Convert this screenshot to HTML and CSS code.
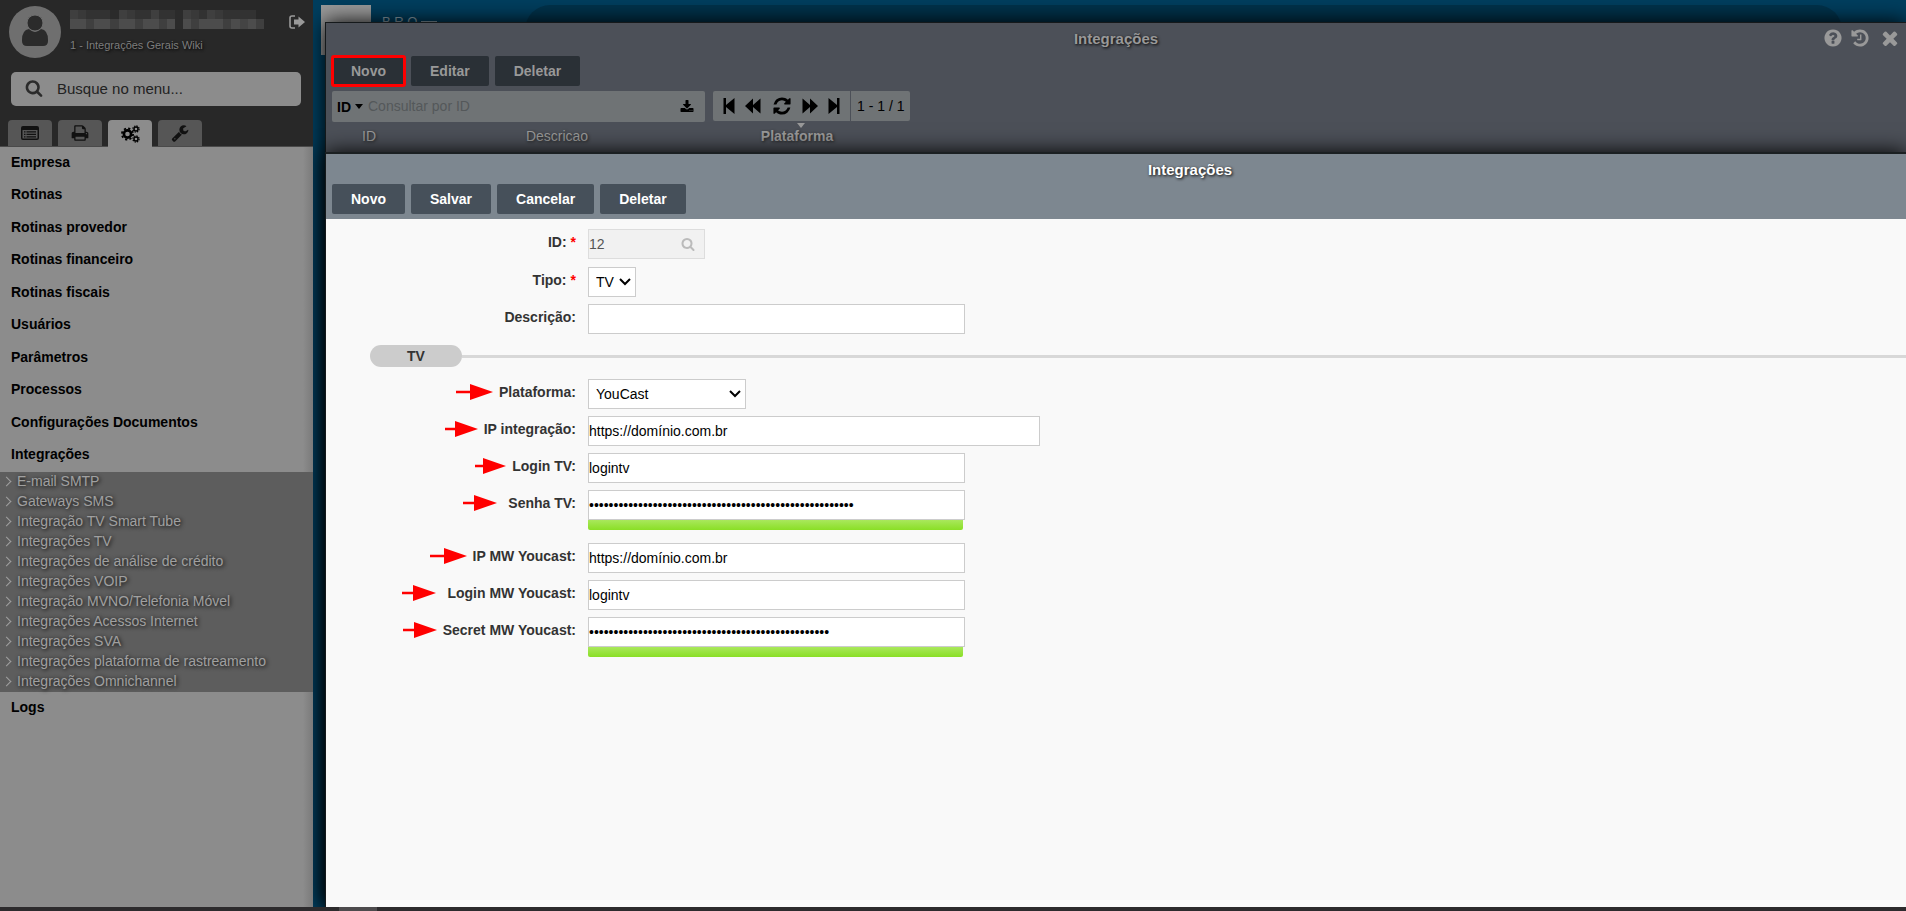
FILE: index.html
```
<!DOCTYPE html>
<html lang="pt-BR">
<head>
    <meta charset="UTF-8">
    <meta name="viewport" content="width=device-width, initial-scale=1.0">
    <title>Integrações</title>
    <link rel="stylesheet" href="styles.css">
</head>
<body>
    <div class="workspace">
        <aside class="sidebar">
            <header class="sidebar-header">
                <div class="user">
                    <svg class="avatar" viewBox="0 0 52 52" aria-hidden="true">
                        <circle cx="26" cy="26" r="26" fill="#6f6f6f"/>
                        <path d="M20 23q-7 1-7 11v1q0 5 5 5h16q5 0 5-5v-1q0-10-7-11-3 3-6 3t-6-3z" fill="#2b2b2b"/>
                        <circle cx="26" cy="17" r="8" fill="#2b2b2b" stroke="#6f6f6f"/>
                    </svg>
                    <div class="user-info">
                        <svg class="user-name" viewBox="0 0 194 20" aria-hidden="true" shape-rendering="crispEdges">
                            <path fill="#323232" d="M0 0h186v19H0z"/>
                            <path fill="#3f3f3f" d="M0 0h8v9H0zM49 0h8v9h-8zM81 0h8v9h-8zM113 0h8v9h-8zM137 0h8v9h-8zM16 9h8v10h-8zM40 9h9v10h-9zM65 9h8v10h-8zM89 9h8v10h-8zM121 9h8v10h-8zM153 9h8v10h-8zM186 9h8v10h-8z"/>
                            <path fill="#393939" d="M8 0h8v9H8zM57 0h8v9h-8zM121 0h8v9h-8zM145 0h8v9h-8z"/>
                            <path fill="#4c4c4c" d="M0 9h16v10H0zM24 9h16v10H24zM49 9h16v10H49zM73 9h16v10H73zM97 9h8v10h-8zM113 9h8v10h-8zM129 9h24v10h-24zM161 9h9v10h-9zM178 9h8v10h-8z"/>
                            <path fill="#444" d="M170 9h8v10h-8z"/>
                            <path fill="#2b2b2b" d="M40 0h9v9h-9zM105 0h8v19h-8z"/>
                        </svg>
                        <p class="user-company">1 - Integrações Gerais Wiki</p>
                    </div>
                    <button class="icon-btn logout" aria-label="Sair">
                        <svg width="16" height="14" viewBox="0 0 16 14">
                            <path d="M6 1H3Q1 1 1 3v8q0 2 2 2h3" fill="none" stroke="#999" stroke-width="1.6"/>
                            <path d="M5 4.500h4.500V1.500L16 7l-6.500 5.500V9.500H5z" fill="#999"/>
                        </svg>
                    </button>
                </div>
                <label class="menu-search">
                    <svg width="18" height="18" viewBox="0 0 1792 1792" aria-hidden="true"><path d="M1216 832q0-185-131.500-316.500t-316.500-131.500-316.500 131.500-131.500 316.500 131.500 316.500 316.500 131.500 316.500-131.500 131.500-316.500zm512 832q0 52-38 90t-90 38q-54 0-90-38l-343-342q-179 124-399 124-143 0-273.500-55.500t-225-150-150-225-55.500-273.500 55.500-273.500 150-225 225-150 273.500-55.500 273.500 55.500 225 150 150 225 55.500 273.500q0 220-124 399l343 343q37 37 37 90z"/></svg>
                    <input type="text" placeholder="Busque no menu..." aria-label="Busque no menu">
                </label>
                <nav class="tabs">
                    <button class="tab" aria-label="Cadastros">
                        <svg width="18" height="14" viewBox="0 0 18 14">
                            <path fill-rule="evenodd" d="M2 0h14q2 0 2 2v10q0 2-2 2H2q-2 0-2-2V2Q0 0 2 0zM1.500 4v8q0 .5.5.5h14q.5 0 .5-.5V4z"/>
                            <path d="M3 5.200h1.500v1.300H3zM3 7.700h1.500V9H3zM3 10.200h1.500v1.300H3zM5.500 5.200H15v1.300H5.500zM5.500 7.700H15V9H5.500zM5.500 10.200H15v1.300H5.500z"/>
                        </svg>
                    </button>
                    <button class="tab" aria-label="Relatórios">
                        <svg width="18" height="18" viewBox="0 0 1792 1792"><path d="M448 1536h896v-256h-896v256zm0-640h896v-384h-160q-40 0-68-28t-28-68v-160h-640v640zm1152 64q0-26-19-45t-45-19-45 19-19 45 19 45 45 19 45-19 19-45zm128 0v416q0 13-9.500 22.500t-22.500 9.500h-224v160q0 40-28 68t-68 28h-960q-40 0-68-28t-28-68v-160h-224q-13 0-22.500-9.500t-9.500-22.500v-416q0-79 56.500-135.500t135.500-56.500h64v-544q0-40 28-68t68-28h672q40 0 88 20t76 48l152 152q28 28 48 76t20 88v256h64q79 0 135.500 56.500t56.500 135.500z"/></svg>
                    </button>
                    <button class="tab active" aria-label="Sistema">
                        <svg width="19" height="18" viewBox="0 0 19 18" fill="none" stroke="#000">
                            <circle cx="6.500" cy="9" r="3.600" stroke-width="2.600"/>
                            <circle cx="6.500" cy="9" r="5.600" stroke-width="1.800" stroke-dasharray="2.200 2.198"/>
                            <circle cx="15" cy="4" r="2" stroke-width="1.400"/>
                            <circle cx="15" cy="4" r="3.100" stroke-width="1.200" stroke-dasharray="1.400 1.034"/>
                            <circle cx="15" cy="14" r="2" stroke-width="1.400"/>
                            <circle cx="15" cy="14" r="3.100" stroke-width="1.200" stroke-dasharray="1.400 1.034"/>
                        </svg>
                    </button>
                    <button class="tab" aria-label="Ferramentas">
                        <svg width="18" height="18" viewBox="0 0 1792 1792"><path d="M448 1472q0-26-19-45t-45-19-45 19-19 45 19 45 45 19 45-19 19-45zm644-420l-682 682q-37 37-90 37-52 0-91-37l-106-108q-38-36-38-90 0-53 38-91l681-681q39 98 114.500 173.500t173.500 114.500zm634-435q0 39-23 106-47 134-164.500 217.500t-258.500 83.500q-185 0-316.500-131.500t-131.500-316.500 131.500-316.500 316.500-131.500q58 0 121.500 16.500t107.500 46.500q16 11 16 28t-16 28l-293 169v224l193 107q5-3 79-48.500t135.500-81 70.500-35.500q15 0 23.500 10t8.500 25z"/></svg>
                    </button>
                </nav>
            </header>
            <ul class="menu">
                <li><a href="#">Empresa</a></li>
                <li><a href="#">Rotinas</a></li>
                <li><a href="#">Rotinas provedor</a></li>
                <li><a href="#">Rotinas financeiro</a></li>
                <li><a href="#">Rotinas fiscais</a></li>
                <li><a href="#">Usuários</a></li>
                <li><a href="#">Parâmetros</a></li>
                <li><a href="#">Processos</a></li>
                <li><a href="#">Configurações Documentos</a></li>
                <li>
                    <a href="#">Integrações</a>
                    <ul class="submenu">
                        <li><a href="#">E-mail SMTP</a></li>
                        <li><a href="#">Gateways SMS</a></li>
                        <li><a href="#">Integração TV Smart Tube</a></li>
                        <li><a href="#">Integrações TV</a></li>
                        <li><a href="#">Integrações de análise de crédito</a></li>
                        <li><a href="#">Integrações VOIP</a></li>
                        <li><a href="#">Integração MVNO/Telefonia Móvel</a></li>
                        <li><a href="#">Integrações Acessos Internet</a></li>
                        <li><a href="#">Integrações SVA</a></li>
                        <li><a href="#">Integrações plataforma de rastreamento</a></li>
                        <li><a href="#">Integrações Omnichannel</a></li>
                    </ul>
                </li>
                <li><a href="#">Logs</a></li>
            </ul>
        </aside>

        <main class="desktop">
            <div class="topbar">
                <div class="brand-logo"></div>
                <div class="brand-name">B R O<span class="brand-dash"></span></div>
                <div class="topbar-search"></div>
            </div>

            <!-- Lista -->
            <section class="window window-list">
                <div class="window-title">
                    <h2>Integrações</h2>
                    <div class="window-actions">
                        <button class="icon-btn" aria-label="Ajuda"><svg width="20" height="20" viewBox="0 0 1792 1792"><path d="M1024 1376v-192q0-14-9-23t-23-9h-192q-14 0-23 9t-9 23v192q0 14 9 23t23 9h192q14 0 23-9t9-23zm256-672q0-88-55.500-163t-138.500-116-170-41q-243 0-371 213-15 24 8 42l132 100q7 6 19 6 16 0 25-12 53-68 86-92 34-24 86-24 48 0 85.500 26t37.500 59q0 38-20 61t-68 45q-63 28-115.500 86.500t-52.500 125.500v36q0 14 9 23t23 9h192q14 0 23-9t9-23q0-19 21.500-49.500t54.500-49.500q32-18 49-28.500t46-35 44.500-48 28-60.500 12.500-81zm384 192q0 209-103 385.500t-279.500 279.500-385.500 103-385.500-103-279.500-279.500-103-385.500 103-385.500 279.500-279.500 385.500-103 385.500 103 279.500 279.500 103 385.500z"/></svg></button>
                        <button class="icon-btn" aria-label="Histórico"><svg width="20" height="20" viewBox="0 0 1792 1792"><path d="M1664 896q0 156-61 298t-164 245-245 164-298 61q-172 0-327-72.500t-264-204.500q-7-10-6.500-22.500t8.500-20.500l137-138q10-9 25-9 16 2 23 12 73 95 179 147t225 52q104 0 198.500-40.500t163.500-109.500 109.500-163.500 40.500-198.500-40.500-198.500-109.500-163.500-163.500-109.500-198.500-40.500q-98 0-188 35.500t-160 101.500l137 138q31 30 14 69-17 40-59 40h-448q-26 0-45-19t-19-45v-448q0-42 40-59 39-17 69 14l130 129q107-101 244.500-156.500t284.500-55.500q156 0 298 61t245 164 164 245 61 298zm-640-288v448q0 14-9 23t-23 9h-320q-14 0-23-9t-9-23v-64q0-14 9-23t23-9h224v-352q0-14 9-23t23-9h64q14 0 23 9t9 23z"/></svg></button>
                        <button class="icon-btn" aria-label="Fechar"><svg width="22" height="22" viewBox="0 0 1792 1792"><path d="M1490 1322q0 40-28 68l-136 136q-28 28-68 28t-68-28l-294-294-294 294q-28 28-68 28t-68-28l-136-136q-28-28-28-68t28-68l294-294-294-294q-28-28-28-68t28-68l136-136q28-28 68-28t68 28l294 294 294-294q28-28 68-28t68 28l136 136q28 28 28 68t-28 68l-294 294 294 294q28 28 28 68z"/></svg></button>
                    </div>
                </div>
                <div class="toolbar">
                    <button class="btn highlight">Novo</button>
                    <button class="btn">Editar</button>
                    <button class="btn">Deletar</button>
                </div>
                <div class="filter">
                    <div class="filter-box">
                        <button class="filter-field">ID<span class="caret"></span></button>
                        <input type="text" placeholder="Consultar por ID" aria-label="Consultar por ID">
                        <button class="icon-btn" aria-label="Exportar"><svg width="14" height="14" viewBox="0 0 1792 1792"><path d="M1344 1344q0-26-19-45t-45-19-45 19-19 45 19 45 45 19 45-19 19-45zm256 0q0-26-19-45t-45-19-45 19-19 45 19 45 45 19 45-19 19-45zm128-224v320q0 40-28 68t-68 28h-1472q-40 0-68-28t-28-68v-320q0-40 28-68t68-28h465l135 136q58 56 136 56t136-56l136-136h464q40 0 68 28t28 68zm-325-569q17 41-14 70l-448 448q-18 19-45 19t-45-19l-448-448q-31-29-14-70 17-39 59-39h256v-448q0-26 19-45t45-19h256q26 0 45 19t19 45v448h256q42 0 59 39z"/></svg></button>
                    </div>
                    <div class="pager">
                        <button class="icon-btn" aria-label="Primeiro"><svg width="12" height="16" viewBox="0 0 12 16"><path d="M.5 0H3v7L11.500 0v16L3 9v7H.5z"/></svg></button>
                        <button class="icon-btn" aria-label="Anterior"><svg width="16" height="16" viewBox="0 0 16 16"><path d="M0 8l8-7.500V7l7.500-6.500v15L8 9v6.500z"/></svg></button>
                        <button class="icon-btn" aria-label="Atualizar"><svg width="20" height="20" viewBox="0 0 1792 1792"><path d="M1639 1056q0 5-1 7-64 268-268 434.500t-478 166.500q-146 0-282.500-55t-243.500-157l-129 129q-19 19-45 19t-45-19-19-45v-448q0-26 19-45t45-19h448q26 0 45 19t19 45-19 45l-137 137q71 66 161 102t187 36q134 0 250-65t186-179q11-17 53-117 8-23 30-23h192q13 0 22.500 9.500t9.500 22.500zm25-800v448q0 26-19 45t-45 19h-448q-26 0-45-19t-19-45 19-45l138-138q-148-137-349-137-134 0-250 65t-186 179q-11 17-53 117-8 23-30 23h-199q-13 0-22.500-9.500t-9.500-22.500v-7q65-268 270-434.500t480-166.500q146 0 284 55.500t245 156.500l130-129q19-19 45-19t45 19 19 45z"/></svg></button>
                        <button class="icon-btn" aria-label="Próximo"><svg width="16" height="16" viewBox="0 0 16 16"><path d="M.5.5L8 7V.5L16 8l-8 7.500V9L.5 15.500z"/></svg></button>
                        <button class="icon-btn" aria-label="Último"><svg width="12" height="16" viewBox="0 0 12 16"><path d="M11.500 0H9v7L.5 0v16L9 9v7h2.500z"/></svg></button>
                    </div>
                    <div class="pager-info">1 - 1 / 1</div>
                </div>
                <table class="grid">
                    <thead>
                        <tr>
                            <th class="col-id">ID</th>
                            <th class="col-desc">Descricao</th>
                            <th class="col-plat sorted">Plataforma</th>
                        </tr>
                    </thead>
                </table>
            </section>

            <!-- Formulário -->
            <section class="window window-form">
                <div class="form-header">
                    <div class="window-title">
                        <h2>Integrações</h2>
                    </div>
                    <div class="toolbar">
                        <button class="btn">Novo</button>
                        <button class="btn">Salvar</button>
                        <button class="btn">Cancelar</button>
                        <button class="btn">Deletar</button>
                    </div>
                </div>
                <form class="form">
                    <div class="row">
                        <label for="id">ID: <span class="required">*</span></label>
                        <div class="lookup">
                            <input id="id" type="text" value="12" disabled>
                            <svg width="14" height="14" viewBox="0 0 1792 1792" aria-hidden="true"><path d="M1216 832q0-185-131.500-316.500t-316.500-131.500-316.500 131.500-131.500 316.500 131.500 316.500 316.500 131.500 316.500-131.500 131.500-316.500zm512 832q0 52-38 90t-90 38q-54 0-90-38l-343-342q-179 124-399 124-143 0-273.500-55.500t-225-150-150-225-55.500-273.500 55.500-273.500 150-225 225-150 273.500-55.500 273.500 55.500 225 150 150 225 55.500 273.500q0 220-124 399l343 343q37 37 37 90z"/></svg>
                        </div>
                    </div>
                    <div class="row">
                        <label for="tipo">Tipo: <span class="required">*</span></label>
                        <select id="tipo" class="field-xs">
                            <option>TV</option>
                        </select>
                    </div>
                    <div class="row">
                        <label for="descricao">Descrição:</label>
                        <input id="descricao" class="field" type="text">
                    </div>
                    <div class="divider"><span>TV</span></div>
                    <div class="row">
                        <label for="plataforma"><svg class="arrow" width="37" height="16" viewBox="0 0 37 16"><path d="M0 6.700h14V0l23 8-23 8V9.300H0z"/></svg>Plataforma:</label>
                        <select id="plataforma" class="field-sm">
                            <option>YouCast</option>
                        </select>
                    </div>
                    <div class="row">
                        <label for="ip"><svg class="arrow" width="33" height="16" viewBox="0 0 33 16"><path d="M0 6.700h10V0l23 8-23 8V9.300H0z"/></svg>IP integração:</label>
                        <input id="ip" class="field-lg" type="text" value="https://domínio.com.br">
                    </div>
                    <div class="row">
                        <label for="login"><svg class="arrow" width="31" height="16" viewBox="0 0 31 16"><path d="M0 6.700h8V0l23 8-23 8V9.300H0z"/></svg>Login TV:</label>
                        <input id="login" class="field" type="text" value="logintv">
                    </div>
                    <div class="row">
                        <label for="senha"><svg class="arrow arrow-far" width="34" height="16" viewBox="0 0 34 16"><path d="M0 6.700h11V0l23 8-23 8V9.300H0z"/></svg>Senha TV:</label>
                        <div class="password">
                            <input id="senha" class="field" type="password" value="integracaotvyoucastintegracaotvyoucastintegracaotvyouc">
                            <div class="strength"></div>
                        </div>
                    </div>
                    <div class="row">
                        <label for="ip-mw"><svg class="arrow" width="37" height="16" viewBox="0 0 37 16"><path d="M0 6.700h14V0l23 8-23 8V9.300H0z"/></svg>IP MW Youcast:</label>
                        <input id="ip-mw" class="field" type="text" value="https://domínio.com.br">
                    </div>
                    <div class="row">
                        <label for="login-mw"><svg class="arrow arrow-far" width="34" height="16" viewBox="0 0 34 16"><path d="M0 6.700h11V0l23 8-23 8V9.300H0z"/></svg>Login MW Youcast:</label>
                        <input id="login-mw" class="field" type="text" value="logintv">
                    </div>
                    <div class="row">
                        <label for="secret-mw"><svg class="arrow" width="34" height="16" viewBox="0 0 34 16"><path d="M0 6.700h11V0l23 8-23 8V9.300H0z"/></svg>Secret MW Youcast:</label>
                        <div class="password">
                            <input id="secret-mw" class="field" type="password" value="secretmwyoucastsecretmwyoucastsecretmwyoucastsecr">
                            <div class="strength"></div>
                        </div>
                    </div>
                </form>
            </section>
        </main>
    </div>
    <footer class="taskbar"><span class="taskbar-item"></span></footer>
</body>
</html>
```
FILE: styles.css
```
* {
    box-sizing: border-box;
}
body {
    font-family: "Liberation Sans", Arial, sans-serif;
    font-size: 14px;
    margin: 0;
    height: 100vh;
    display: flex;
    flex-direction: column;
    overflow: hidden;
    background-color: #003e5e;
}
button, input, select {
    font-family: inherit;
    font-size: 14px;
}
ul {
    list-style: none;
    margin: 0;
    padding: 0;
}
a {
    color: inherit;
    text-decoration: none;
}
.icon-btn {
    background: none;
    border: none;
    padding: 0;
    display: flex;
    cursor: pointer;
}
.workspace {
    flex: 1;
    display: flex;
    min-height: 0;
}

/* Menu lateral */
.sidebar {
    width: 313px;
    flex-shrink: 0;
    background: linear-gradient(to left, #7a7a7a, #8c8c8c 10px);
}
.sidebar-header {
    background-color: #282828;
    border-bottom: 1px solid #4a4a4a;
    padding: 6px 8px 0;
}
.user {
    display: flex;
    align-items: flex-start;
    gap: 9px;
    padding-left: 1px;
}
.avatar {
    width: 52px;
    height: 52px;
}
.user-info {
    flex: 1;
    padding-top: 4px;
}
.user-name {
    display: block;
    width: 194px;
    height: 20px;
}
.user-company {
    margin: 8px 0 0;
    font-size: 11px;
    line-height: 14px;
    color: #7d7d7d;
    text-shadow: 1px 1px 3px #000;
}
.logout {
    padding: 9px 0 0;
}
.menu-search {
    display: flex;
    align-items: center;
    gap: 14px;
    height: 34px;
    margin: 14px 4px 14px 3px;
    padding: 0 0 2px 14px;
    background-color: #8c8c8c;
    border-radius: 5px;
}
.menu-search svg {
    fill: #2b2b2b;
}
.menu-search input {
    flex: 1;
    border: none;
    outline: none;
    padding: 0;
    background: transparent;
    font-size: 15px;
}
.menu-search input::placeholder {
    color: #222;
}
.tabs {
    display: flex;
    gap: 6px;
}
.tab {
    display: flex;
    align-items: center;
    justify-content: center;
    width: 44px;
    height: 26px;
    padding: 0;
    border: none;
    border-radius: 4px 4px 0 0;
    background-color: #565656;
    cursor: pointer;
}
.tab svg {
    fill: #111;
}
.tab.active {
    background-color: #8c8c8c;
    margin-bottom: -1px;
    height: 27px;
}
.tab.active svg {
    fill: none;
}
.menu > li > a {
    display: block;
    line-height: 30px;
    padding: 0 0 2px 11px;
    font-weight: bold;
    color: #000;
}
.menu > li:nth-child(even) > a {
    line-height: 31px;
}
.submenu {
    background-color: #5d5d5d;
}
.submenu a {
    display: flex;
    align-items: center;
    gap: 7px;
    line-height: 18px;
    padding: 0 0 2px 3px;
    color: #a0a0a0;
    text-shadow: 1px 1px 4px #000;
}
.submenu a::before {
    content: "";
    width: 6px;
    height: 6px;
    border-top: 1px solid #a0a0a0;
    border-right: 1px solid #a0a0a0;
    transform: rotate(45deg);
}

/* Area de trabalho */
.desktop {
    flex: 1;
    position: relative;
    overflow: hidden;
    background-color: #003e5e;
}
.topbar {
    display: flex;
    align-items: flex-start;
    gap: 11px;
    padding: 5px 64px 0 8px;
}
.brand-logo {
    width: 50px;
    height: 50px;
    background-color: #999;
}
.brand-name {
    display: flex;
    gap: 4px;
    width: 132px;
    padding-top: 9px;
    color: #8ba1ad;
    font-size: 13px;
}
.brand-dash {
    width: 16px;
    height: 1px;
    margin-top: 7px;
    background-color: #8ba1ad;
}
.topbar-search {
    flex: 1;
    height: 50px;
    border-radius: 25px;
    background-color: #00324b;
}
.window {
    position: absolute;
    left: 12px;
    right: 0;
    bottom: 0;
    border-left: 1px solid #15191b;
    box-shadow: 0 0 20px #000;
}
.window-list {
    top: 22px;
    border-top: 1px solid #15191b;
    background-color: #4c5058;
}
.window-form {
    top: 152px;
    border-top: 2px solid #1b2022;
    background-color: #f9f9f9;
}
.window-title {
    position: relative;
    padding-bottom: 2px;
    text-align: center;
}
.window-title h2 {
    margin: 0;
    font-size: 15px;
    line-height: 31px;
    color: #fff;
    text-shadow: 1px 1px 3px #000;
}
.window-list h2 {
    color: #999;
}
.window-actions {
    position: absolute;
    top: 4px;
    right: 5px;
    display: flex;
    align-items: center;
    gap: 7px;
}
.window-actions svg {
    fill: #999;
}
.window-actions .icon-btn:last-child {
    margin-left: 2px;
}
.toolbar {
    display: flex;
    gap: 6px;
    padding-left: 6px;
}
.btn {
    height: 30px;
    padding: 0 19px;
    border: none;
    border-radius: 2px;
    background-color: #46505a;
    color: #fff;
    font-weight: bold;
    cursor: pointer;
}
.window-list .btn {
    background-color: #2a3036;
    color: #999;
}
.window-list .btn.highlight {
    outline: 3px solid #f00;
    outline-offset: -2px;
}
.filter {
    display: flex;
    margin-top: 5px;
    padding-left: 6px;
}
.filter-box {
    display: flex;
    align-items: center;
    width: 373px;
    height: 31px;
    margin-right: 8px;
    padding: 0 11px 0 5px;
    border-radius: 2px;
    background-color: #6f7375;
}
.filter-field {
    display: flex;
    align-items: center;
    gap: 4px;
    padding: 0;
    border: none;
    background: none;
    font-weight: bold;
}
.caret {
    border: 4px solid transparent;
    border-top: 5px solid #000;
    border-bottom: none;
}
.filter-box input {
    flex: 1;
    padding: 0 0 2px 5px;
    border: none;
    outline: none;
    background: transparent;
}
.filter-box input::placeholder {
    color: #54585a;
}
.pager {
    display: flex;
    align-items: center;
    justify-content: space-between;
    width: 137px;
    height: 30px;
    padding: 0 10px;
    border-radius: 2px 0 0 2px;
    background-color: #6f7375;
}
.pager-info {
    height: 30px;
    line-height: 30px;
    margin-left: 1px;
    padding: 0 6px;
    border-radius: 0 2px 2px 0;
    background-color: #6f7375;
}
.grid {
    width: 554px;
    margin-left: 6px;
    border-collapse: collapse;
    table-layout: fixed;
}
.grid th {
    position: relative;
    padding: 0;
    line-height: 29px;
    font-weight: normal;
    color: #999;
    text-shadow: 1px 1px 3px #222;
}
.grid .col-id {
    width: 74px;
}
.grid .col-desc {
    width: 302px;
}
.grid .sorted {
    font-weight: bold;
}
.grid .sorted::before {
    content: "";
    position: absolute;
    top: 1px;
    left: 50%;
    border: 4px solid transparent;
    border-top: 5px solid #999;
    border-bottom: none;
}

/* Formulario */
.form-header {
    height: 65px;
    background-color: #7d8790;
}
.form-header .window-title {
    padding: 2px 0 0 148px;
}
.form-header h2 {
    line-height: 28px;
}
.form {
    display: flex;
    flex-direction: column;
    gap: 7px;
    padding-top: 10px;
}
.row {
    display: flex;
    align-items: flex-start;
    gap: 12px;
}
.row label {
    display: flex;
    align-items: center;
    justify-content: flex-end;
    gap: 4px;
    width: 250px;
    height: 26px;
    font-weight: bold;
    color: #333;
}
.required {
    color: #f00;
}
.row input, .row select {
    height: 30px;
    border: 1px solid #ccc;
    border-radius: 0;
    background-color: #fff;
    color: #000;
}
.row input {
    padding: 0;
}
.row select {
    appearance: none;
    padding: 0 0 0 7px;
    background-image: url("data:image/svg+xml,%3Csvg xmlns='http://www.w3.org/2000/svg' width='12' height='8'%3E%3Cpath d='M1 1l5 5 5-5' fill='none' stroke='%23000' stroke-width='2'/%3E%3C/svg%3E");
    background-repeat: no-repeat;
    background-position: right 4px center;
}
.field {
    width: 377px;
}
.field-xs {
    width: 48px;
}
.field-sm {
    width: 158px;
}
.field-lg {
    width: 452px;
}
.lookup {
    display: flex;
    align-items: center;
    width: 117px;
    height: 30px;
    margin-bottom: 1px;
    padding-right: 9px;
    border: 1px solid #ddd;
    background-color: #f1f1f1;
}
.lookup input {
    flex: 1;
    min-width: 0;
    height: 28px;
    border: none;
    background: transparent;
    color: #555;
}
.lookup svg {
    fill: #bbb;
}
.divider {
    display: flex;
    align-items: center;
    margin: 4px 0 5px 44px;
}
.divider span {
    width: 92px;
    line-height: 22px;
    border-radius: 11px;
    background-color: #ccc;
    color: #333;
    font-weight: bold;
    text-align: center;
}
.divider::after {
    content: "";
    flex: 1;
    height: 3px;
    background-color: #d8d8d8;
}
.arrow {
    fill: #f00;
    margin-right: 2px;
}
.arrow-far {
    margin-right: 7px;
}
.password {
    display: flex;
    flex-direction: column;
    padding-bottom: 6px;
}
.strength {
    width: 375px;
    height: 10px;
    border-radius: 0 0 2px 2px;
    background: linear-gradient(#a9e85c, #8adf26);
}

/* Barra inferior */
.taskbar {
    height: 4px;
    padding-left: 339px;
    background-color: #2d2b2d;
}
.taskbar-item {
    display: block;
    width: 38px;
    height: 4px;
    background-color: #4d4b4d;
}
```
